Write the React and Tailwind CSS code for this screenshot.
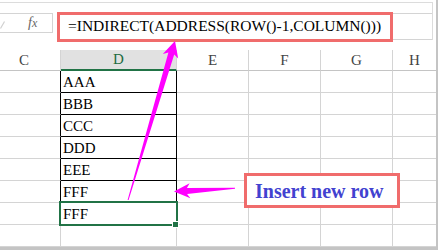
import React from "react";

const rows = ["AAA", "BBB", "CCC", "DDD", "EEE", "FFF", "FFF", ""];
const headers = ["C", "D", "E", "F", "G", "H"];

const HeaderCell = ({ label }) => {
  if (label === "D")
    return (
      <div className="h-[21px] bg-[#e1e1e1] border-r border-r-[#d4d4d4] border-b-2 border-b-[#217346] flex items-center justify-center text-[#1d6b3f]">
        D
      </div>
    );
  return (
    <div
      className={
        label === "H"
          ? "h-[21px] border-b border-b-[#c4c4c4] flex items-center justify-center text-[#444]"
          : "h-[21px] border-r border-r-[#d4d4d4] border-b border-b-[#c4c4c4] flex items-center justify-center text-[#444]"
      }
    >
      {label}
    </div>
  );
};

const DataCell = ({ col, row, text }) => {
  const boxed = row < 6;
  if (col === "C")
    return <div className={boxed ? "h-[22px] border-r border-r-black border-b border-b-[#d4d4d4]" : "h-[22px] border-r border-r-[#d4d4d4] border-b border-b-[#d4d4d4]"} />;
  if (col === "D") {
    if (boxed)
      return (
        <div className="h-[22px] border-r border-r-black border-b border-b-black pl-[2px] pt-[2px] flex items-center text-black">{text}</div>
      );
    if (row === 6)
      return (
        <div className="relative h-[22px] border-r border-r-[#d4d4d4] border-b border-b-[#d4d4d4] pl-[2px] pt-[2px] flex items-center text-black">
          {text}
          <div className="absolute -left-[2px] -top-[2px] w-[119px] h-[25px] border-2 border-[#217346]" />
          <div className="absolute left-[111px] top-[18px] w-[7px] h-[7px] bg-[#217346] border border-white" />
        </div>
      );
    return <div className="h-[22px] border-r border-r-[#d4d4d4] border-b border-b-[#d4d4d4]" />;
  }
  if (col === "H") return <div className="h-[22px] border-b border-b-[#d4d4d4]" />;
  return <div className="h-[22px] border-r border-r-[#d4d4d4] border-b border-b-[#d4d4d4]" />;
};

export default function App() {
  return (
    <div className="relative w-[438px] h-[250px] overflow-hidden bg-white border-r-2 border-b-[3px] border-r-[#c4c4c4] border-b-[#c4c4c4] font-['Liberation_Serif','Times_New_Roman',serif]">
      {/* formula bar */}
      <div className="h-[50px] pt-[2px]">
        <div className="w-[433px] h-[38px] border-t border-r border-t-[#dcdcdc] border-r-[#dcdcdc] pt-[10px] flex items-start">
          <div className="w-[53px] h-[20px] border-t border-b border-r border-[#d4d4d4] flex items-center">
            <svg width="5" height="8" viewBox="0 0 5 8" className="mt-[3px]">
              <path d="M0.5 7.5 L4.5 0.5" stroke="#d0d0d0" strokeWidth="1.2" fill="none" />
            </svg>
            <span className="ml-[23px] text-[14px] italic text-[#666] leading-none">
              f<span className="text-[12px]">x</span>
            </span>
          </div>
          <div className="ml-[4px] flex-1 h-[27px] border-t border-b border-[#d4d4d4]">
            <div className="-mt-[2px] w-[336px] h-[30px] border-[3px] border-[#f06c6c] bg-white pl-[8px] pb-[2px] flex items-center text-[15.5px] text-black whitespace-nowrap">
              =INDIRECT(ADDRESS(ROW()-1,COLUMN()))
            </div>
          </div>
        </div>
      </div>

      {/* sheet grid */}
      <div className="-ml-[12px] w-[448px] grid grid-cols-[73px_116px_72px_72px_72px_43px] text-[15px]">
        {headers.map((h) => (
          <HeaderCell key={h} label={h} />
        ))}
        {rows.map((text, r) =>
          headers.map((h) => <DataCell key={h + r} col={h} row={r} text={text} />)
        )}
      </div>

      {/* callout */}
      <div className="absolute left-[244px] top-[173px] w-[156px] h-[35px] border-[3px] border-[#f06c6c] bg-white pl-[8px] flex items-center text-[20px] font-bold text-[#4242d0] whitespace-nowrap">
        Insert new row
      </div>

      {/* arrows */}
      <svg className="absolute left-0 top-0 pointer-events-none" width="438" height="250">
        <polygon
          fill="#ff00ff"
          points="175,41 178.2,58.6 174.2,54.4 128.6,200.1 127.6,199.9 168.4,52.6 162.8,54"
        />
        <polygon
          fill="#ff00ff"
          points="174,191.5 189.6,183.2 186.9,187.9 235,187.7 235,188.7 187.1,193.9 190.4,198.2"
        />
      </svg>
    </div>
  );
}
